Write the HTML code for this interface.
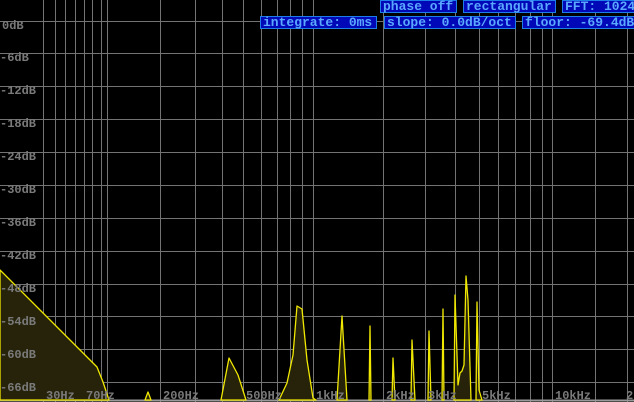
<!DOCTYPE html>
<html><head><meta charset="utf-8"><style>
html,body{margin:0;padding:0;background:#000;width:634px;height:402px;overflow:hidden;position:relative}
.b{position:absolute;height:11px;background:#0008b8;border:1px solid #1e7ee8;color:#5aa8ff;font:bold 13px/11px "Liberation Mono",monospace;padding:0 2px;white-space:pre;box-sizing:content-box}
.l{position:absolute;color:#7a7a7a;font:bold 12px/11px "Liberation Mono",monospace;white-space:pre}
</style></head><body>
<svg width="634" height="402" style="position:absolute;left:0;top:0">
<g stroke="#737373" stroke-width="1" shape-rendering="crispEdges">
<line x1="0" x2="634" y1="21.5" y2="21.5"/><line x1="0" x2="634" y1="53.5" y2="53.5"/><line x1="0" x2="634" y1="86.5" y2="86.5"/><line x1="0" x2="634" y1="119.5" y2="119.5"/><line x1="0" x2="634" y1="152.5" y2="152.5"/><line x1="0" x2="634" y1="185.5" y2="185.5"/><line x1="0" x2="634" y1="218.5" y2="218.5"/><line x1="0" x2="634" y1="251.5" y2="251.5"/><line x1="0" x2="634" y1="284.5" y2="284.5"/><line x1="0" x2="634" y1="316.5" y2="316.5"/><line x1="0" x2="634" y1="349.5" y2="349.5"/><line x1="0" x2="634" y1="382.5" y2="382.5"/>
<path d="M43.5 0V402M55.5 0V402M65.5 0V402M75.5 0V402M84.5 0V402M92.5 0V402M101.5 0V402M107.5 0V402M160.5 0V402M195.5 0V402M222.5 0V402M243.5 0V402M261.5 0V402M277.5 0V402M290.5 0V402M302.5 0V402M313.5 0V402M383.5 0V402M425.5 0V402M455.5 0V402M479.5 0V402M498.5 0V402M515.5 0V402M530.5 0V402M542.5 0V402M552.5 0V402M595.5 0V402M627.5 0V402"/>
</g>
<line x1="0" x2="634" y1="400.5" y2="400.5" stroke="#9a9a9a" stroke-width="2"/>
<g fill="#26230a" stroke="#f0e800" stroke-width="1.3" stroke-linejoin="round">
<path d="M0 270L97 367L103 382L109 400H0Z"/>
<path d="M145 400L148 392L151 400Z"/>
<path d="M221 400L229 358L238 375L246 400Z"/>
<path d="M279 400L287 383L293 355L297 306L302 309L307 360L313 398L316 400Z"/>
<path d="M337 400L342 316L347 400Z"/>
<path d="M369 400L370 326L371 400Z"/>
<path d="M392 400L393 358L395 400Z"/>
<path d="M411 400L412 340L415 400Z"/>
<path d="M428 400L429 331L431 400Z"/>
<path d="M442 400L443 309L444 400Z"/>
<path d="M454 400L455 295L458 385L460 373L462 371L464 365L466 276L468 300L471 400Z"/>
<path d="M476 400L477 302L479 390L482 400Z"/>
</g>
</svg>
<div class="l" style="left:2px;top:21px">0dB</div>
<div class="l" style="left:0;top:53px">-6dB</div>
<div class="l" style="left:0;top:86px">-12dB</div>
<div class="l" style="left:0;top:119px">-18dB</div>
<div class="l" style="left:0;top:152px">-24dB</div>
<div class="l" style="left:0;top:185px">-30dB</div>
<div class="l" style="left:0;top:218px">-36dB</div>
<div class="l" style="left:0;top:251px">-42dB</div>
<div class="l" style="left:0;top:284px">-48dB</div>
<div class="l" style="left:0;top:317px">-54dB</div>
<div class="l" style="left:0;top:350px">-60dB</div>
<div class="l" style="left:0;top:383px">-66dB</div>
<div class="l" style="left:46px;top:391px">30Hz</div>
<div class="l" style="left:86px;top:391px">70Hz</div>
<div class="l" style="left:163px;top:391px">200Hz</div>
<div class="l" style="left:246px;top:391px">500Hz</div>
<div class="l" style="left:316px;top:391px">1kHz</div>
<div class="l" style="left:386px;top:391px">2kHz</div>
<div class="l" style="left:428px;top:391px">3kHz</div>
<div class="l" style="left:482px;top:391px">5kHz</div>
<div class="l" style="left:555px;top:391px">10kHz</div>
<div class="l" style="left:626px;top:391px">2</div>
<div class="b" style="left:380px;top:0;width:71px">phase off</div>
<div class="b" style="left:463px;top:0;width:87px">rectangular</div>
<div class="b" style="left:562px;top:0;width:80px">FFT: 1024</div>
<div class="b" style="left:260px;top:16px;width:111px">integrate: 0ms</div>
<div class="b" style="left:384px;top:16px;width:126px">slope: 0.0dB/oct</div>
<div class="b" style="left:522px;top:16px;width:120px">floor: -69.4dB</div>
</body></html>
